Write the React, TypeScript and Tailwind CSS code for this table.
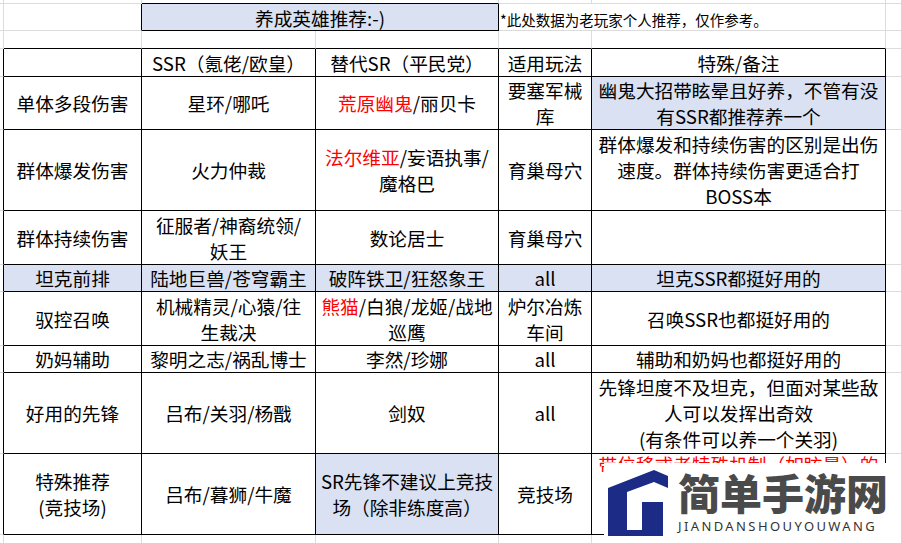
import React from "react";

type Cell = { text: React.ReactNode; bg?: boolean; top?: boolean };
type Row = { h: string; cells: Cell[] };

const colW = ["w-[138px]", "w-[174px]", "w-[183px]", "w-[93px]", "w-[294px]"];

const Red = ({ children }: { children: React.ReactNode }) => <span className="text-[#ff0000]">{children}</span>;

const rows: Row[] = [
  {
    h: "h-[28px]",
    cells: [{ text: "" }, { text: "SSR（氪佬/欧皇）" }, { text: "替代SR（平民党）" }, { text: "适用玩法" }, { text: "特殊/备注" }],
  },
  {
    h: "h-[53px]",
    cells: [
      { text: "单体多段伤害" },
      { text: "星环/哪吒" },
      { text: <><Red>荒原幽鬼</Red>/丽贝卡</> },
      { text: <>要塞军械<br />库</> },
      { text: <>幽鬼大招带眩晕且好养，不管有没<br />有SSR都推荐养一个</>, bg: true },
    ],
  },
  {
    h: "h-[81px]",
    cells: [
      { text: "群体爆发伤害" },
      { text: "火力仲裁" },
      { text: <><Red>法尔维亚</Red>/妄语执事/<br />魔格巴</> },
      { text: "育巢母穴" },
      { text: <>群体爆发和持续伤害的区别是出伤<br />速度。群体持续伤害更适合打<br />BOSS本</> },
    ],
  },
  {
    h: "h-[54px]",
    cells: [
      { text: "群体持续伤害" },
      { text: <>征服者/神裔统领/<br />妖王</> },
      { text: "数论居士" },
      { text: "育巢母穴" },
      { text: "" },
    ],
  },
  {
    h: "h-[27px]",
    cells: [
      { text: "坦克前排", bg: true },
      { text: "陆地巨兽/苍穹霸主", bg: true },
      { text: "破阵铁卫/狂怒象王", bg: true },
      { text: "all", bg: true },
      { text: "坦克SSR都挺好用的", bg: true },
    ],
  },
  {
    h: "h-[54px]",
    cells: [
      { text: "驭控召唤" },
      { text: <>机械精灵/心猿/往<br />生裁决</> },
      { text: <><Red>熊猫</Red>/白狼/龙姬/战地<br />巡鹰</> },
      { text: <>炉尔冶炼<br />车间</> },
      { text: "召唤SSR也都挺好用的" },
    ],
  },
  {
    h: "h-[27px]",
    cells: [
      { text: "奶妈辅助" },
      { text: "黎明之志/祸乱博士" },
      { text: "李然/珍娜" },
      { text: "all" },
      { text: "辅助和奶妈也都挺好用的" },
    ],
  },
  {
    h: "h-[81px]",
    cells: [
      { text: "好用的先锋" },
      { text: "吕布/关羽/杨戬" },
      { text: "剑奴" },
      { text: "all" },
      { text: <>先锋坦度不及坦克，但面对某些敌<br />人可以发挥出奇效<br />(有条件可以养一个关羽)</> },
    ],
  },
  {
    h: "h-[81px]",
    cells: [
      { text: <>特殊推荐<br />(竞技场)</> },
      { text: "吕布/暮狮/牛魔" },
      { text: <>SR先锋不建议上竞技<br />场（除非练度高）</>, bg: true },
      { text: "竞技场" },
      { text: <Red>带位移或者特殊机制（如眩晕）的</Red>, top: true },
    ],
  },
];

export default function App() {
  return (
    <div className="relative w-[901px] h-[543px] overflow-hidden bg-white text-black font-['Noto_Sans_CJK_SC','Noto_Sans',sans-serif]">
      {/* top gridline row */}
      <div className="flex h-[4px]">
        <div className="w-[4px] border-r border-b border-[#dcdcdc]" />
        <div className="w-[138px] border-r border-b border-[#dcdcdc]" />
        <div className="w-[357px] border-r border-r-[#dcdcdc] border-b border-b-black" />
        <div className="w-[93px] border-r border-b border-[#dcdcdc]" />
        <div className="w-[294px] border-r border-b border-[#dcdcdc]" />
        <div className="flex-1 border-b border-[#dcdcdc]" />
      </div>

      {/* title row */}
      <div className="flex h-[27px]">
        <div className="w-[4px] border-r border-b border-[#dcdcdc]" />
        <div className="w-[138px] border-r border-r-black border-b border-b-[#dcdcdc]" />
        <div className="w-[357px] bg-[#d9e1f2] border-r border-b border-black flex items-center justify-center pt-[2px] text-[18.67px] leading-[26px] whitespace-nowrap">
          养成英雄推荐:-)
        </div>
        <div className="w-[387px] border-r border-b border-[#dcdcdc] flex items-center pt-[5px] pl-px text-[14.5px] whitespace-nowrap overflow-visible">
          *此处数据为老玩家个人推荐，仅作参考。
        </div>
        <div className="flex-1 border-b border-[#dcdcdc]" />
      </div>

      {/* spacer row above table */}
      <div className="flex h-[18px]">
        <div className="w-[4px] border-r border-b border-[#dcdcdc]" />
        {colW.map((w, i) => (
          <div key={i} className={`${w} border-r border-r-[#dcdcdc] border-b border-b-black`} />
        ))}
        <div className="flex-1 border-b border-[#dcdcdc]" />
      </div>

      {/* table */}
      {rows.map((r, ri) => (
        <div key={ri} className={`flex ${r.h}`}>
          <div className="w-[4px] border-r border-r-black border-b border-b-[#dcdcdc]" />
          {r.cells.map((c, ci) => (
            <div
              key={ci}
              className={`${colW[ci]} ${c.bg ? "bg-[#d9e1f2]" : ""} ${c.top ? "items-start leading-[20px]" : "items-center leading-[26px]"} border-r border-b border-black flex justify-center text-center text-[18.67px] whitespace-nowrap overflow-hidden`}
            >
              <div>{c.text}</div>
            </div>
          ))}
          <div className="flex-1 border-b border-[#dcdcdc]" />
        </div>
      ))}

      {/* below table */}
      <div className="flex h-[8px]">
        <div className="w-[4px] border-r border-[#dcdcdc]" />
        {colW.map((w, i) => (
          <div key={i} className={`${w} border-r border-[#dcdcdc]`} />
        ))}
      </div>

      {/* watermark logo */}
      <div className="absolute left-[604px] top-[463px] right-0 bottom-0 bg-white flex items-start pl-[2px]">
        <svg width="62" height="66" viewBox="0 0 62 66" className="mt-[7px] shrink-0">
          <path d="M2,18 L48,0 L62,6 L62,18 L48,12 L21,22 L21,60 L36,60 L36,32 L57,32 L57,66 L2,66 Z" fill="#1b2b86" />
        </svg>
        <div className="ml-[10px] mt-[8px] flex flex-col">
          <div className="text-[42px] leading-[42px] font-black text-[#4a4a4a] whitespace-nowrap">简单手游网</div>
          <div className="mt-[6px] text-[13px] leading-[14px] tracking-[2.4px] text-[#333] font-['Noto_Sans',sans-serif] whitespace-nowrap">
            JIANDANSHOUYOUWANG
          </div>
        </div>
      </div>
    </div>
  );
}
